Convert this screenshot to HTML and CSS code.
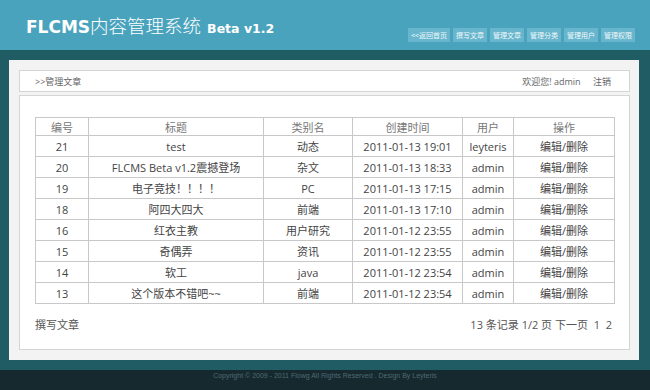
FILE: index.html
```html
<!DOCTYPE html>
<html lang="zh-CN">
<head>
  <meta charset="UTF-8" />
  <title>FLCMS内容管理系统</title>
  <link rel="stylesheet" href="styles.css">
</head>
<body>

  <div class="header">
    <h1 class="logo"><b>FLCMS</b><span class="cn">内容管理系统</span><small>Beta v1.2</small></h1>
    <div class="nav">
      <a href="#">&lt;&lt;返回首页</a>
      <a href="#">撰写文章</a>
      <a href="#">管理文章</a>
      <a href="#">管理分类</a>
      <a href="#">管理用户</a>
      <a href="#">管理权限</a>
    </div>
  </div>

  <div class="main">
    <div class="panel">
      <div class="crumb">
        <span>&gt;&gt;管理文章</span>
        <span class="user">欢迎您! admin <a href="#">注销</a></span>
      </div>

      <div class="content">
        <table class="list">
          <colgroup>
            <col style="width:53px"><col style="width:175px"><col style="width:89px">
            <col style="width:110px"><col style="width:51px"><col style="width:101px">
          </colgroup>
          <tr><th>编号</th><th>标题</th><th>类别名</th><th>创建时间</th><th>用户</th><th>操作</th></tr>
          <tr><td>21</td><td>test</td><td>动态</td><td>2011-01-13 19:01</td><td>leyteris</td><td>编辑/删除</td></tr>
          <tr><td>20</td><td>FLCMS Beta v1.2震撼登场</td><td>杂文</td><td>2011-01-13 18:33</td><td>admin</td><td>编辑/删除</td></tr>
          <tr><td>19</td><td>电子竞技！！！！</td><td>PC</td><td>2011-01-13 17:15</td><td>admin</td><td>编辑/删除</td></tr>
          <tr><td>18</td><td>阿四大四大</td><td>前端</td><td>2011-01-13 17:10</td><td>admin</td><td>编辑/删除</td></tr>
          <tr><td>16</td><td>红衣主教</td><td>用户研究</td><td>2011-01-12 23:55</td><td>admin</td><td>编辑/删除</td></tr>
          <tr><td>15</td><td>奇偶弄</td><td>资讯</td><td>2011-01-12 23:55</td><td>admin</td><td>编辑/删除</td></tr>
          <tr><td>14</td><td>软工</td><td>java</td><td>2011-01-12 23:54</td><td>admin</td><td>编辑/删除</td></tr>
          <tr><td>13</td><td>这个版本不错吧~~</td><td>前端</td><td>2011-01-12 23:54</td><td>admin</td><td>编辑/删除</td></tr>
        </table>

        <div class="bottom">
          <a href="#">撰写文章</a>
          <span class="pager">13 条记录 1/2 页 下一页 &nbsp;1&nbsp; 2</span>
        </div>
      </div>
    </div>
  </div>

  <div class="footer">Copyright © 2009 - 2011 Flowg All Rights Reserved . Design By Leyteris</div>

</body>
</html>
```

FILE: styles.css
```css
body {
  margin: 0;
  font-family: 'Open Sans', 'Noto Sans CJK SC', sans-serif;
  color: #444;
  background: #16292f;
}

a {
  color: inherit;
  text-decoration: none;
}

.header {
  height: 50px;
  background: #4aa3bd;
  display: flex;
  justify-content: space-between;
  padding: 0 15px 0 26px;
}

.logo {
  margin: 0;
  padding-top: 8px;
  color: #fff;
  font-weight: normal;
  line-height: 26px;
}

.logo b {
  font-family: 'DejaVu Sans', sans-serif;
  font-size: 17px;
  font-weight: bold;
}

.logo .cn {
  font-family: 'Noto Sans CJK SC', sans-serif;
  font-size: 18.5px;
  font-weight: 300;
  margin-right: 6px;
}

.logo small {
  font-family: 'DejaVu Sans', sans-serif;
  font-size: 12.5px;
  font-weight: bold;
}

.nav {
  display: flex;
  gap: 3px;
  align-items: flex-end;
  padding-bottom: 8px;
}

.nav a {
  background: #68b6cd;
  color: #eef8fb;
  font-family: 'Noto Sans CJK SC', sans-serif;
  font-size: 7px;
  line-height: 14px;
  padding: 0 3px;
}

.main {
  background: #1f5c63;
  padding: 10px 11px 10px 9px;
}

.panel {
  background: #f3f3f3;
  padding: 10px 9px 10px 10px;
}

.crumb {
  background: #fff;
  border: 1px solid #d5d5d5;
  height: 20px;
  display: flex;
  justify-content: space-between;
  align-items: center;
  padding: 0 18px 0 15px;
  font-size: 9px;
  color: #666;
}

.crumb .user a {
  margin-left: 10px;
}

.content {
  margin-top: 3px;
  background: #fff;
  border: 1px solid #d5d5d5;
  padding: 21px 15px 17px 15px;
}

.list {
  border-collapse: collapse;
  width: 579px;
  table-layout: fixed;
  font-size: 11px;
}

.list th, .list td {
  border: 1px solid #c8c8c8;
  text-align: center;
  padding: 0;
  white-space: nowrap;
}

.list th {
  font-weight: normal;
  color: #777;
  height: 17px;
}

.list td {
  height: 20px;
  color: #444;
}

.bottom {
  display: flex;
  justify-content: space-between;
  align-items: center;
  margin-top: 12px;
  font-size: 11px;
  color: #555;
  padding-right: 2px;
}

.footer {
  height: 17px;
  text-align: center;
  font-family: 'Liberation Sans', sans-serif;
  font-size: 7px;
  color: #4f6a72;
  padding-top: 2px;
}
```
